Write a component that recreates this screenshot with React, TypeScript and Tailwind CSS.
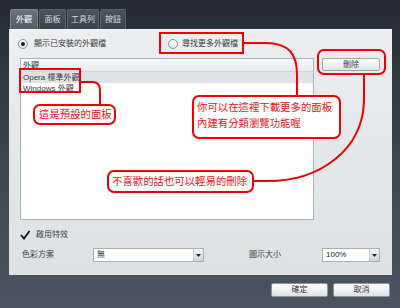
import React from 'react';

const tabs = ['外觀', '面板', '工具列', '按鈕'];

function Radio({ checked }: { checked?: boolean }) {
  return (
    <span className="w-[10px] h-[10px] rounded-full border border-[#8c949c] bg-gradient-to-b from-[#ffffff] to-[#dfe3e6] flex items-center justify-center shrink-0">
      {checked && <span className="w-[4px] h-[4px] rounded-full bg-[#1a1a1a]" />}
    </span>
  );
}

function Select({ value, width }: { value: string; width: string }) {
  return (
    <div className={`${width} h-[14px] flex border border-[#a7afb8] bg-white`}>
      <span className="flex-1 pl-[3px] text-[8px] leading-[12px] text-[#222]">{value}</span>
      <span className="w-[10px] h-full border-l border-[#c3c9cf] bg-gradient-to-b from-[#f3f4f6] to-[#cfd4d9] flex items-center justify-center">
        <svg width="5" height="3" viewBox="0 0 5 3">
          <polygon points="0,0 5,0 2.5,3" fill="#222" />
        </svg>
      </span>
    </div>
  );
}

function Callout({ className, children }: { className: string; children: React.ReactNode }) {
  return (
    <div
      className={`absolute bg-white border-2 border-[#f00000] rounded-[7px] text-[#ee1111] text-[10.4px] leading-[16px] whitespace-nowrap ${className}`}
    >
      {children}
    </div>
  );
}

export default function App() {
  return (
    <div className="relative w-[400px] h-[308px] overflow-hidden bg-gradient-to-b from-[#252b32] via-[#3c4550] to-[#4b5460] font-['Liberation_Sans','Noto_Sans_CJK_TC',sans-serif]">
      {/* tabs */}
      <div className="flex pl-[10px] pt-[9px] h-[29px] gap-px">
        {tabs.map((t, i) => (
          <div
            key={t}
            className={`h-[20px] flex items-center justify-center text-[8px] rounded-t-[2px] border border-b-0 ${
              i === 0
                ? 'w-[28px] bg-gradient-to-b from-[#6a727c] to-[#545c66] border-[#7d858e] text-white'
                : 'bg-gradient-to-b from-[#4c545d] to-[#3b424a] border-[#59616a] text-[#d7dbdf]'
            } ${i === 1 ? 'w-[27px]' : ''} ${i === 2 ? 'w-[32px]' : ''} ${i === 3 ? 'w-[26px]' : ''}`}
          >
            {t}
          </div>
        ))}
      </div>

      {/* panel */}
      <div className="ml-[9px] w-[383px] h-[246px] bg-gradient-to-b from-[#eceef0] to-[#dde1e4] border-t border-[#f6f7f8] text-[8px] text-[#3a3d40]">
        <div className="flex items-center pt-[8px] h-[20px]">
          <div className="flex items-center gap-[6px] pl-[9px] w-[159px]">
            <Radio checked />
            <span>顯示已安裝的外觀檔</span>
          </div>
          <div className="flex items-center gap-[4px]">
            <Radio />
            <span>尋找更多外觀檔</span>
          </div>
        </div>

        <div className="flex mt-[8px]">
          <div className="ml-[11px] w-[294px] h-[162px] bg-white border border-[#aab2ba] flex flex-col">
            <div className="h-[13px] pl-[2px] leading-[13px] bg-gradient-to-b from-[#f9fafb] to-[#e6e9ec] border-b border-[#d2d6da]">外觀</div>
            <div className="h-[11px] pl-[2px] leading-[11px] bg-[#dfe2e6]">Opera 標準外觀</div>
            <div className="h-[11px] pl-[2px] leading-[11px]">Windows 外觀</div>
          </div>
          <div className="ml-[8px] w-[58px] h-[13px] border border-[#9da5ae] rounded-[2px] bg-gradient-to-b from-[#ffffff] to-[#dfe3e7] flex items-center justify-center">
            刪除
          </div>
        </div>

        <div className="flex items-center gap-[6px] pl-[11px] mt-[9px] h-[11px]">
          <svg width="10" height="10" viewBox="0 0 10 10">
            <polyline points="1,5 4,8.5 9.5,1" fill="none" stroke="#111" strokeWidth="1.8" />
          </svg>
          <span>啟用特效</span>
        </div>

        <div className="flex items-center mt-[8px] h-[14px]">
          <span className="pl-[13px] w-[84px]">色彩方案</span>
          <Select value="無" width="w-[111px]" />
          <span className="ml-[45px] w-[73px]">圖示大小</span>
          <Select value="100%" width="w-[58px]" />
        </div>
      </div>

      {/* bottom buttons */}
      <div className="flex justify-end gap-[5px] pr-[10px] pt-[8px]">
        <div className="w-[57px] h-[14px] border border-[#8d959f] rounded-[2px] bg-gradient-to-b from-[#ffffff] to-[#dde1e5] text-[8px] text-[#333] flex items-center justify-center">確定</div>
        <div className="w-[57px] h-[14px] border border-[#8d959f] rounded-[2px] bg-gradient-to-b from-[#ffffff] to-[#dde1e5] text-[8px] text-[#333] flex items-center justify-center">取消</div>
      </div>

      {/* annotation overlay */}
      <div className="absolute left-[159px] top-[32px] w-[85px] h-[22px] border-2 border-[#f00000]" />
      <div className="absolute left-[19px] top-[68px] w-[62px] h-[25px] border-2 border-[#f00000]" />
      <div className="absolute left-[317px] top-[49px] w-[69px] h-[26px] border-2 border-[#f00000] rounded-[7px]" />

      <svg className="absolute left-0 top-0" width="400" height="308" viewBox="0 0 400 308" fill="none">
        <path d="M80 82 H92 Q100 82 100 90 V105" stroke="#f00000" strokeWidth="2" />
        <path d="M243 43 H265 C290 43 297 55 297 75 V96" stroke="#f00000" strokeWidth="2" />
        <path d="M364 75 V102 C362 150 320 181 268 181 H253" stroke="#f00000" strokeWidth="2" />
      </svg>

      <Callout className="left-[33px] top-[104px] w-[83px] h-[21px] pl-[4px] leading-[17px]">這是預設的面板</Callout>
      <Callout className="left-[192px] top-[95px] w-[149px] h-[44px] pl-[3px] pt-[3px]">
        <div>你可以在這裡下載更多的面板</div>
        <div>內建有分類瀏覽功能喔</div>
      </Callout>
      <Callout className="left-[107px] top-[170px] w-[147px] h-[23px] pl-[3px] leading-[19px]">不喜歡的話也可以輕易的刪除</Callout>
    </div>
  );
}
